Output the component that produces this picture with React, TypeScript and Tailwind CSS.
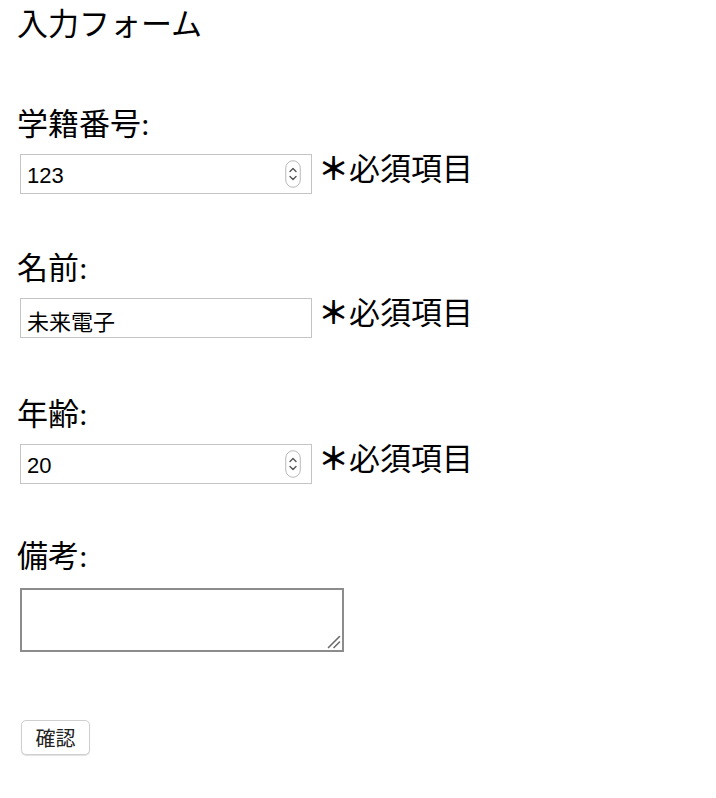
import { useState } from 'react';

const serif = { fontFamily: '"Liberation Serif", "Noto Sans CJK JP", serif' };

function Spinner() {
  return (
    <svg
      className="pointer-events-none absolute right-[11px] top-[6px]"
      width="16"
      height="28"
      viewBox="0 0 16 28"
    >
      <rect x="0.75" y="0.75" width="14.5" height="26.5" rx="7.25" fill="#fff" stroke="#b8b8b8" strokeWidth="1" />
      <path d="M5 11.5 L8 8.5 L11 11.5" fill="none" stroke="#555" strokeWidth="1.4" strokeLinecap="round" strokeLinejoin="round" />
      <path d="M5 16.5 L8 19.5 L11 16.5" fill="none" stroke="#555" strokeWidth="1.4" strokeLinecap="round" strokeLinejoin="round" />
    </svg>
  );
}

function Field({
  label,
  value,
  onChange,
  stepper,
  className,
}: {
  label: string;
  value: string;
  onChange: (v: string) => void;
  stepper?: boolean;
  className?: string;
}) {
  return (
    <div className={className}>
      <div className="text-[31px] leading-[36px] text-black">{label}</div>
      <div className="mt-[11px] flex items-center">
        <div className="relative ml-[3px]">
          <input
            type="text"
            value={value}
            onChange={(e) => onChange(e.target.value)}
            className="block h-[40px] w-[292px] border border-[#c4c4c4] bg-white pl-[6px] pr-[30px] pt-[3px] text-[22px] text-black outline-none"
            style={{ fontFamily: '"Liberation Sans", "Noto Sans CJK JP", sans-serif' }}
          />
          {stepper && <Spinner />}
        </div>
        <span className="ml-[6px] -mt-[8px] text-[31px] leading-[36px] text-black">
          <span className="font-bold">＊</span>必須項目
        </span>
      </div>
    </div>
  );
}

export default function App() {
  const [id, setId] = useState('123');
  const [name, setName] = useState('未来電子');
  const [age, setAge] = useState('20');
  const [note, setNote] = useState('');

  return (
    <div className="min-h-[798px] bg-white pl-[17px] pt-[7px]" style={serif}>
      <div className="text-[31px] leading-[36px] text-black">入力フォーム</div>

      <Field className="mt-[64px]" label="学籍番号:" value={id} onChange={setId} stepper />
      <Field className="mt-[57px]" label="名前:" value={name} onChange={setName} />
      <Field className="mt-[59px]" label="年齢:" value={age} onChange={setAge} stepper />

      <div className="mt-[55px]">
        <div className="text-[31px] leading-[36px] text-black">備考:</div>
        <div className="relative mt-[13px] ml-[3px] w-[324px]">
          <textarea
            value={note}
            onChange={(e) => setNote(e.target.value)}
            className="block h-[64px] w-[324px] resize-none border-2 border-[#8c8c8c] bg-white text-[16px] outline-none"
          />
          <svg className="pointer-events-none absolute bottom-[3px] right-[3px]" width="14" height="14" viewBox="0 0 14 14">
            <path d="M1.5 12.5 L12.5 1.5" stroke="#6b6b6b" strokeWidth="1.6" strokeLinecap="round" />
            <path d="M7 12.5 L12.5 7" stroke="#6b6b6b" strokeWidth="1.6" strokeLinecap="round" />
          </svg>
        </div>
      </div>

      <button
        type="button"
        className="mt-[68px] ml-[4px] flex h-[35px] w-[69px] items-center justify-center rounded-[5px] border border-[#cfcfcf] bg-white text-[20px] text-[#222] shadow-[0_1px_1px_rgba(0,0,0,0.12)]"
        style={{ fontFamily: '"Noto Sans CJK JP", sans-serif' }}
      >
        確認
      </button>
    </div>
  );
}
